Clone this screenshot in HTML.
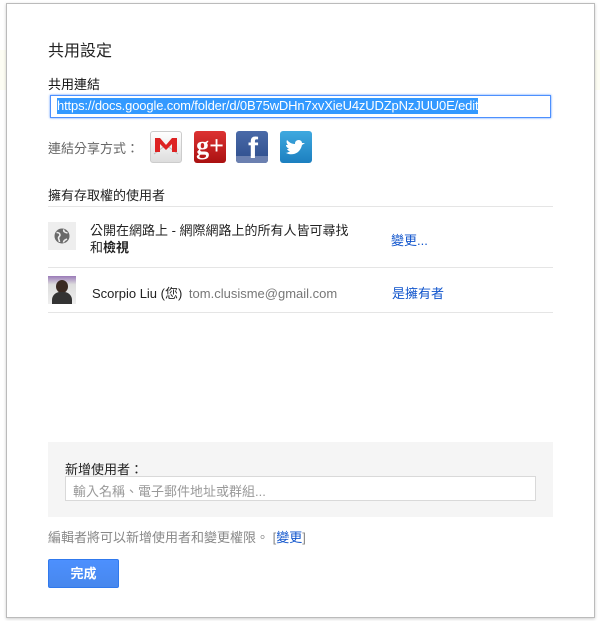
<!DOCTYPE html>
<html><head><meta charset="utf-8"><style>
body{margin:0;width:600px;height:621px;background:#fff;position:relative;overflow:hidden;font-family:"Liberation Sans","Noto Sans CJK TC",sans-serif;font-size:13px;color:#222}
.band{position:absolute;left:0;right:0;top:50px;height:40px;background:#fdfdf3}
.dlg{position:absolute;left:6px;top:3px;width:587px;height:613px;background:#fff;border:1px solid #bbb;box-shadow:0 1px 3px rgba(0,0,0,.2)}
.a{position:absolute;white-space:nowrap}
.ln{position:absolute;left:48px;width:505px;height:1px;background:#e5e5e5}
.ico{position:absolute;top:131px;width:32px;height:32px;border-radius:3px}
a{color:#15c;text-decoration:none}
</style></head><body>
<div class="band"></div>
<div class="dlg"></div>
<div class="a" style="left:48px;top:37px;font-size:16px">共用設定</div>
<div class="a" style="left:48px;top:74px;color:#111">共用連結</div>
<div class="a" style="left:50px;top:95px;width:499px;height:21px;border:1px solid #4d90fe;box-shadow:0 0 2px #4d90fe"></div>
<div class="a" style="left:57px;top:98px;background:#3399ff;color:#fff;font-size:13px;line-height:16px;letter-spacing:-0.15px">https://docs.google.com/folder/d/0B75wDHn7xvXieU4zUDZpNzJUU0E/edit</div>
<div class="a" style="left:48px;top:138px;color:#666">連結分享方式：</div>
<div class="ico" style="left:150px;background:linear-gradient(#fff,#ddd);border:1px solid #ccc;width:30px;height:30px"><svg width="30" height="30"><path d="M3 22L15 13L27 22" fill="none" stroke="#bbb"/><path d="M4 6h5l6 7l6-7h5v14h-5v-8l-6 6l-6-6v8h-5z" fill="#d22"/></svg></div>
<div class="ico" style="left:194px;background:linear-gradient(#d33,#a11);color:#fff;font:bold 26px 'Liberation Serif',serif;line-height:30px;text-align:center">g+</div>
<div class="ico" style="left:236px;background:linear-gradient(#4a6aa8,#2d4d8c);overflow:hidden"><div style="position:absolute;bottom:0;left:0;right:0;height:7px;background:#6b80b0"></div><span style="position:absolute;left:12px;top:1px;color:#fff;font:bold 30px 'Liberation Sans';">f</span></div>
<div class="ico" style="left:280px;background:linear-gradient(#3fa9e0,#1c7fc0)"><svg width="32" height="32"><path d="M6 22c6 3 14 1 16-8l3-2l-3 0c0-3-4-4-6-2c-1 1-1 2-1 3c-4 0-6-2-8-4c-1 2 0 4 1 5l-2 0c0 2 2 3 3 4l-2 0c1 2 2 2 3 2c-1 1-3 2-5 2z" fill="#fff"/></svg></div>
<div class="a" style="left:48px;top:185px">擁有存取權的使用者</div>
<div class="ln" style="top:206px"></div>
<div class="a" style="left:48px;top:222px;width:28px;height:28px;background:#eee"><svg width="28" height="28"><circle cx="14" cy="14" r="7.5" fill="#6a6a6a"/><path d="M8.5 10.5c2 0 3.5 1 3.5 2.5s-1.5 1.5-1.5 3s1 2 1 4M16 7.5c-1 2 1 3 3.5 3.5M15.5 20.5c0-2 1.5-2.5 3.5-3.5" stroke="#eee" stroke-width="1.6" fill="none"/></svg></div>
<div class="a" style="left:90px;top:222px;line-height:17px">公開在網路上 - 網際網路上的所有人皆可尋找<br>和<b>檢視</b></div>
<div class="a" style="left:391px;top:230px"><a>變更...</a></div>
<div class="ln" style="top:267px"></div>
<div class="a" style="left:48px;top:276px;width:28px;height:28px;background:linear-gradient(#9a7ab8,#ddd 30%,#eee);overflow:hidden"><div style="position:absolute;left:8px;top:4px;width:12px;height:13px;border-radius:50%;background:#3a2a22"></div><div style="position:absolute;left:4px;top:16px;width:20px;height:12px;border-radius:8px 8px 0 0;background:#333"></div></div>
<div class="a" style="left:92px;top:283px">Scorpio Liu (您) <span style="color:#777;margin-left:3px">tom.clusisme@gmail.com</span></div>
<div class="a" style="left:392px;top:283px"><a>是擁有者</a></div>
<div class="ln" style="top:312px"></div>
<div class="a" style="left:48px;top:442px;width:505px;height:75px;background:#f5f5f5"></div>
<div class="a" style="left:65px;top:459px">新增使用者：</div>
<div class="a" style="left:65px;top:476px;width:469px;height:23px;background:#fff;border:1px solid #d9d9d9"></div>
<div class="a" style="left:73px;top:481px;color:#999">輸入名稱、電子郵件地址或群組...</div>
<div class="a" style="left:48px;top:527px;color:#888">編輯者將可以新增使用者和變更權限。 [<a>變更</a>]</div>
<div class="a" style="left:48px;top:559px;width:69px;height:27px;background:linear-gradient(#4d90fe,#4787ed);border:1px solid #3079ed;border-radius:2px;color:#fff;font-weight:bold;text-align:center;line-height:27px">完成</div>
</body></html>
